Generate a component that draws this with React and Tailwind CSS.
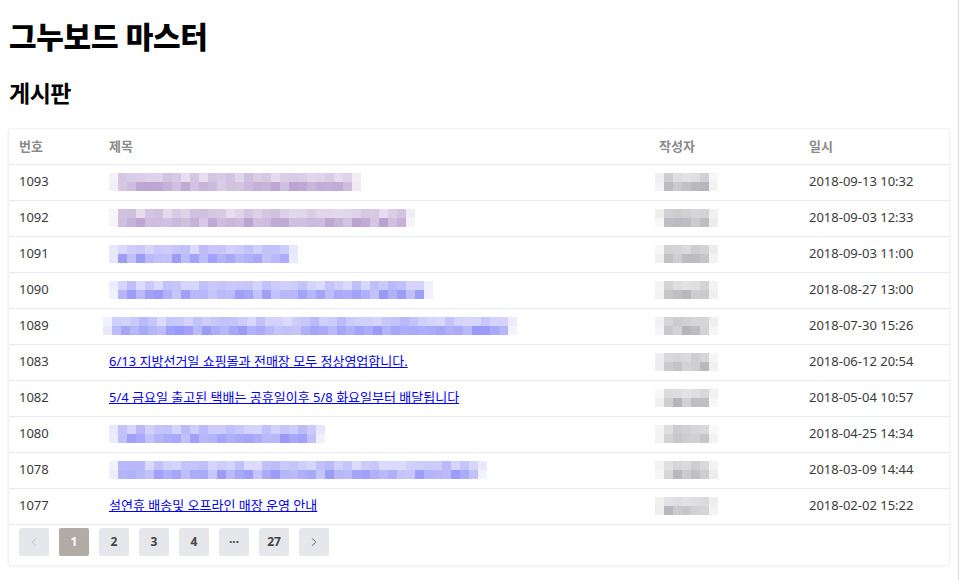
import { ChevronLeft, ChevronRight } from 'lucide-react';

const tones = {
    visited: [85, 26, 139],
    link: [0, 0, 238],
    gray: [70, 70, 80],
};

// deterministic pseudo-random so the mosaic is stable between renders
function rand(seed) {
    let s = seed;
    return () => {
        s = (s * 9301 + 49297) % 233280;
        return s / 233280;
    };
}

function Mosaic({ blocks, tone, seed, offset = false }) {
    const r = rand(seed);
    const [cr, cg, cb] = tones[tone];
    const row = (min, max) =>
        Array.from({ length: blocks }, (_, i) => {
            const edge = i === 0 || i === blocks - 1;
            const a = edge ? 0.04 + r() * 0.06 : min + r() * (max - min);
            return `rgba(${cr},${cg},${cb},${a.toFixed(3)})`;
        });
    const top = row(0.14, 0.28);
    const bottom = row(0.22, 0.4);
    return (
        <div className={`flex flex-col ${offset ? '-ml-[6px]' : ''}`}>
            <div className="flex">{top.map((c, i) => <span key={i} className="block w-[9px] h-[9px]" style={{ background: c }} />)}</div>
            <div className="flex">{bottom.map((c, i) => <span key={i} className="block w-[9px] h-[9px]" style={{ background: c }} />)}</div>
        </div>
    );
}

const posts = [
    { no: 1093, blocks: 28, tone: 'visited', date: '2018-09-13 10:32' },
    { no: 1092, blocks: 34, tone: 'visited', date: '2018-09-03 12:33' },
    { no: 1091, blocks: 21, tone: 'link', date: '2018-09-03 11:00' },
    { no: 1090, blocks: 36, tone: 'link', date: '2018-08-27 13:00' },
    { no: 1089, blocks: 46, tone: 'link', date: '2018-07-30 15:26', offset: true },
    { no: 1083, title: '6/13 지방선거일 쇼핑몰과 전매장 모두 정상영업합니다.', date: '2018-06-12 20:54' },
    { no: 1082, title: '5/4 금요일 출고된 택배는 공휴일이후 5/8 화요일부터 배달됩니다', date: '2018-05-04 10:57' },
    { no: 1080, blocks: 24, tone: 'link', date: '2018-04-25 14:34' },
    { no: 1078, blocks: 42, tone: 'link', date: '2018-03-09 14:44' },
    { no: 1077, title: '설연휴 배송및 오프라인 매장 운영 안내', date: '2018-02-02 15:22' },
];

const pages = ['1', '2', '3', '4', '···', '27'];

export default function App() {
    return (
        <div className="w-[959px] min-h-[580px] border-r border-[#d9d9d9] bg-white px-[9px] text-[#3a3a3a]" style={{ fontFamily: '"Noto Sans", "Noto Sans CJK KR", sans-serif' }}>
            <h1 className="pt-[17px] text-[30px] leading-[40px] font-extrabold text-black tracking-[-0.3px]">그누보드 마스터</h1>
            <h2 className="mt-[21px] text-[23px] leading-[30px] font-bold text-black tracking-[-0.5px]">게시판</h2>

            <div className="mt-[21px] w-[940px] bg-white rounded-[2px] shadow-[0_0_0_1px_#eef1f6,0_1px_4px_rgba(0,0,0,0.08)]">
                <table className="w-full table-fixed border-collapse text-[13px]">
                    <colgroup>
                        <col className="w-[90px]" />
                        <col className="w-[550px]" />
                        <col className="w-[150px]" />
                        <col className="w-[150px]" />
                    </colgroup>
                    <thead>
                        <tr className="h-[35px] border-b border-[#e6ebf2] text-left text-[#8a8a8a]">
                            <th className="px-[10px] font-bold">번호</th>
                            <th className="px-[10px] font-bold">제목</th>
                            <th className="px-[10px] font-bold">작성자</th>
                            <th className="px-[10px] font-bold">일시</th>
                        </tr>
                    </thead>
                    <tbody>
                        {posts.map((p, idx) => (
                            <tr key={p.no} className="h-[36px] border-b border-[#e6ebf2]">
                                <td className="px-[10px]">{p.no}</td>
                                <td className="px-[10px]">
                                    {p.title ? (
                                        <a href="#" className="text-[#0000ee] underline">{p.title}</a>
                                    ) : (
                                        <Mosaic blocks={p.blocks} tone={p.tone} seed={p.no * 7 + 3} offset={p.offset} />
                                    )}
                                </td>
                                <td className="px-[10px]">
                                    <div className="-ml-[4px]">
                                        <Mosaic blocks={7} tone="gray" seed={idx * 31 + 11} />
                                    </div>
                                </td>
                                <td className="px-[10px]">{p.date}</td>
                            </tr>
                        ))}
                    </tbody>
                </table>
                <div className="flex gap-[10px] px-[10px] pt-[3px] pb-[9px]">
                    <button className="w-[30px] h-[28px] flex items-center justify-center bg-[#e6e7eb] rounded-[2px] text-[#b8b8bc]">
                        <ChevronLeft className="w-[14px] h-[14px]" strokeWidth={1.5} />
                    </button>
                    {pages.map(p => (
                        <button key={p} className={`w-[30px] h-[28px] flex items-center justify-center rounded-[2px] text-[12px] font-bold ${p === '1' ? 'bg-[#b2aaa4] text-white' : 'bg-[#e6e7eb] text-[#444]'}`}>{p}</button>
                    ))}
                    <button className="w-[30px] h-[28px] flex items-center justify-center bg-[#e6e7eb] rounded-[2px] text-[#555]">
                        <ChevronRight className="w-[14px] h-[14px]" strokeWidth={1.5} />
                    </button>
                </div>
            </div>
        </div>
    );
}
